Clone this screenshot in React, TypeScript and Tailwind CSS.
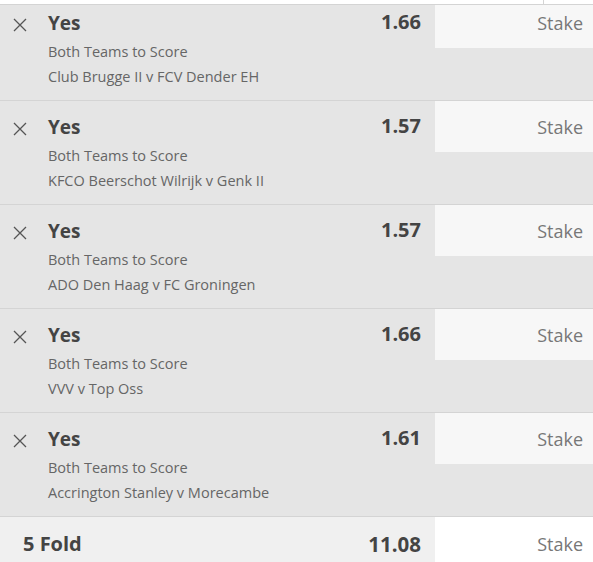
import React from "react";

const bets = [
  { odds: "1.66", match: "Club Brugge II v FCV Dender EH" },
  { odds: "1.57", match: "KFCO Beerschot Wilrijk v Genk II" },
  { odds: "1.57", match: "ADO Den Haag v FC Groningen" },
  { odds: "1.66", match: "VVV v Top Oss" },
  { odds: "1.61", match: "Accrington Stanley v Morecambe" },
];

function XIcon() {
  return (
    <svg width="14" height="14" viewBox="0 0 14 14" fill="none">
      <path d="M1 1L13 13M13 1L1 13" stroke="#555" strokeWidth="1.3" />
    </svg>
  );
}

function Row({ odds, match, first }: { odds: string; match: string; first?: boolean }) {
  return (
    <div className={`flex h-[104px] border-b border-[#d4d4d4] bg-[#e5e5e5] ${first ? "-mt-[8px]" : ""}`}>
      <div className="w-[48px] shrink-0 pl-[13px] pt-[21px]">
        <XIcon />
      </div>
      <div className="flex-1 pt-[11px]">
        <div className="text-[19px] leading-[30px] font-bold text-[#444]">Yes</div>
        <div className="mt-[1px] text-[14.5px] leading-[25px] text-[#666]">Both Teams to Score</div>
        <div className="text-[14.5px] leading-[25px] text-[#666]">{match}</div>
      </div>
      <div className="pt-[10px] pr-[14px] text-[20px] leading-[30px] font-bold text-[#444]">{odds}</div>
      <div className="w-[158px] shrink-0 h-[51px] bg-[#f7f7f7] pr-[10px] pt-[1px] text-right text-[18px] leading-[51px] text-[#777]">
        Stake
      </div>
    </div>
  );
}

export default function App() {
  return (
    <div className="w-[593px] h-[562px] overflow-hidden bg-white" style={{ fontFamily: '"Open Sans", "Noto Sans", sans-serif' }}>
      <div className="flex h-[5px] border-b border-[#d4d4d4] bg-white">
        <div className="w-[544px] border-r border-[#d4d4d4]" />
      </div>
      <div className="h-[96px] overflow-hidden">
        <Row {...bets[0]} first />
      </div>
      {bets.slice(1).map((b, i) => (
        <Row key={i} {...b} />
      ))}
      <div className="flex h-[60px] bg-[#f0f0f0]">
        <div className="flex-1 pl-[23px] pt-[12px] text-[20px] leading-[30px] font-bold text-[#444]">5 Fold</div>
        <div className="pt-[12px] pr-[14px] text-[20.5px] leading-[30px] font-bold text-[#444]">11.08</div>
        <div className="w-[158px] shrink-0 h-[51px] bg-white pr-[10px] pt-[2px] text-right text-[18px] leading-[51px] text-[#777]">
          Stake
        </div>
      </div>
    </div>
  );
}
